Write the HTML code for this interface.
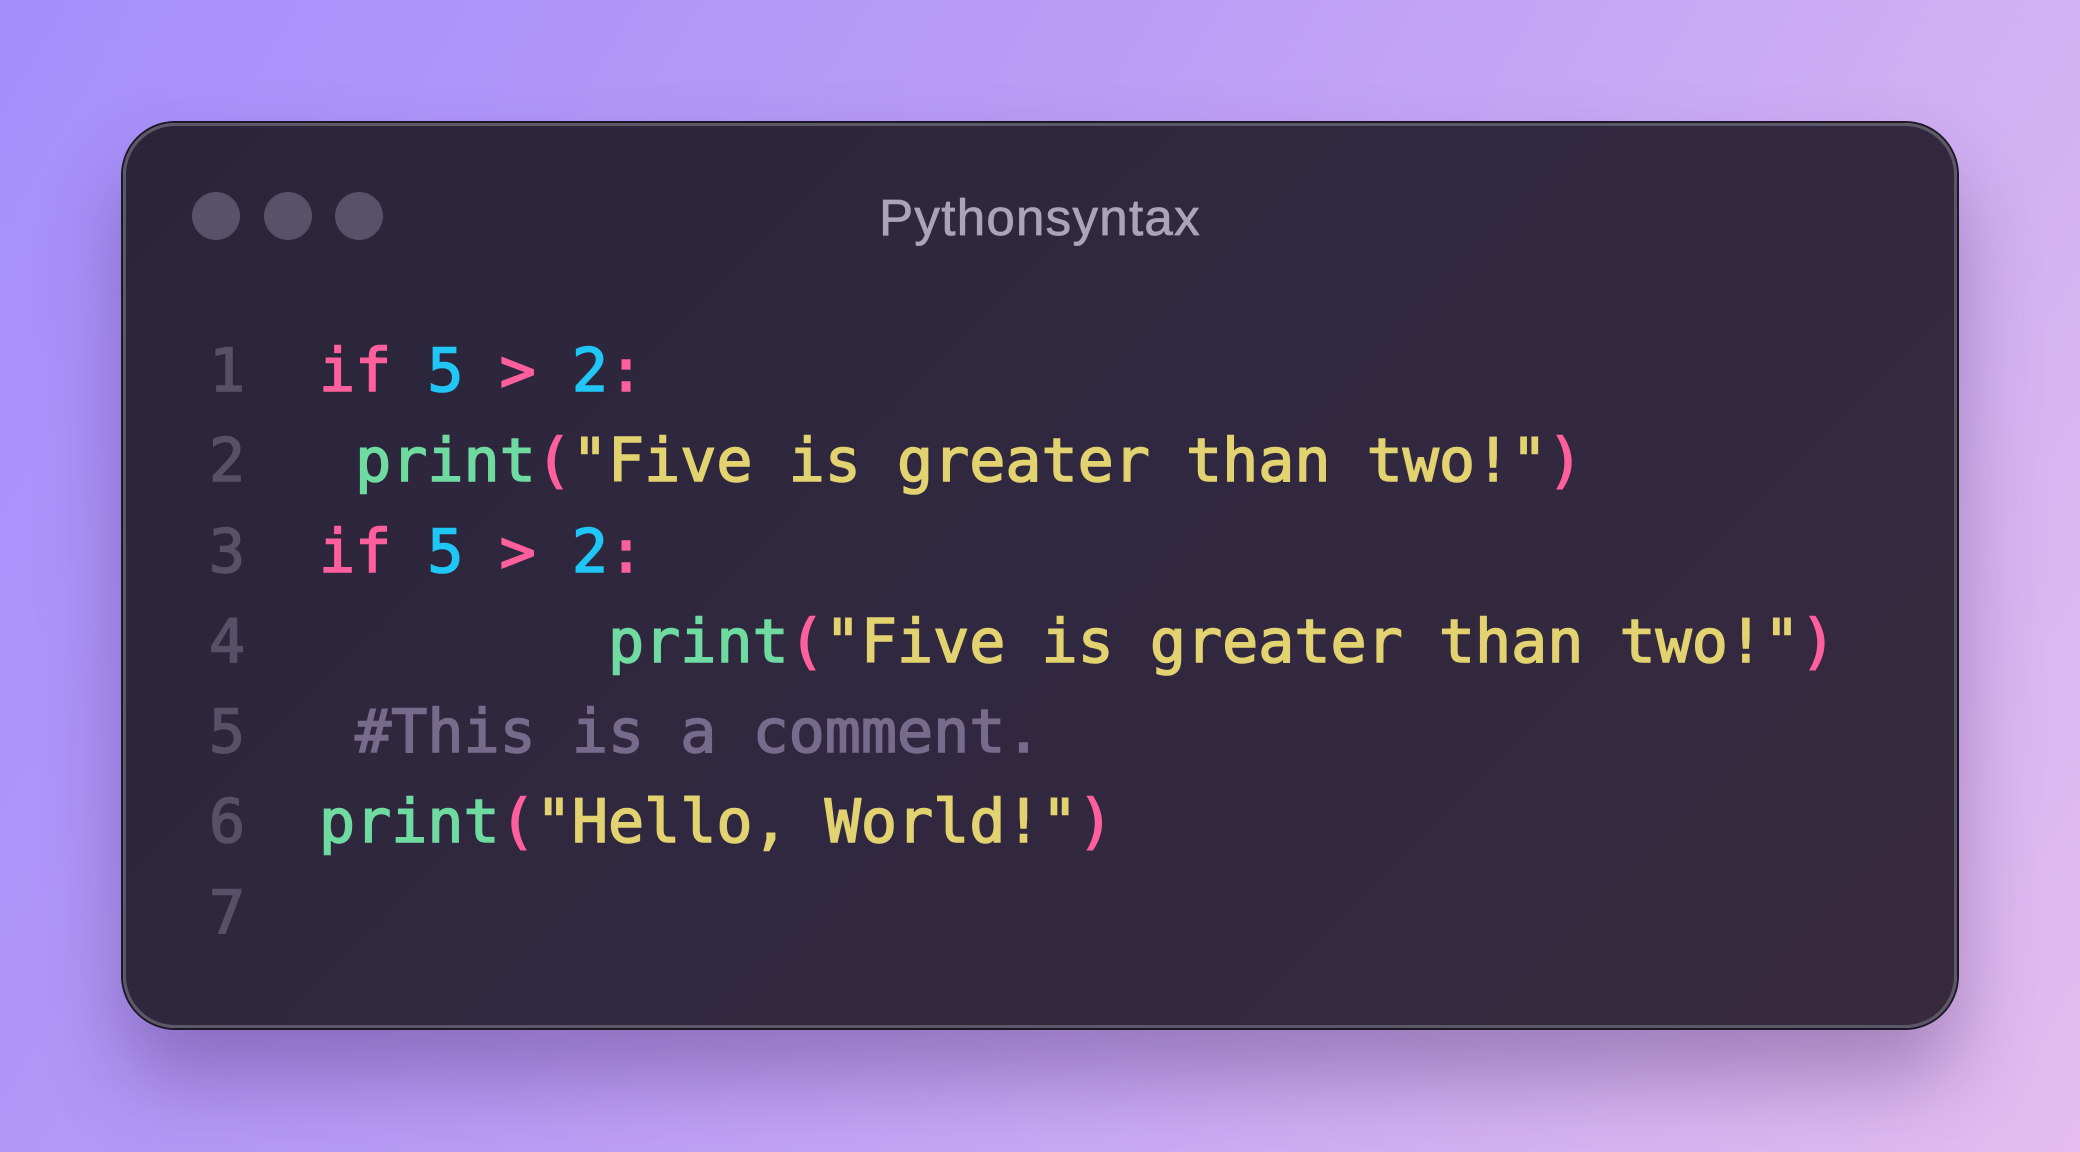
<!DOCTYPE html>
<html><head><meta charset="utf-8"><style>
html,body{margin:0;padding:0}
body{width:2080px;height:1152px;overflow:hidden;position:relative;
background:linear-gradient(120deg,#a48ffb 0%,#b99cf6 40%,#d2b0f3 75%,#e4bdee 100%);}
.win{position:absolute;left:123px;top:123px;width:1834px;height:905px;box-sizing:border-box;
border-radius:52px;background:linear-gradient(135deg,#2a2539 0%,#302840 50%,#372a3c 100%);
border:3px solid #5d5867;box-shadow:0 0 0 2px #1d1825,0 50px 80px rgba(60,30,90,0.35);}
.dot{position:absolute;top:192px;width:48px;height:48px;border-radius:50%;background:#57526a}
.title{position:absolute;left:0;width:2080px;top:188px;text-align:center;font:51px "Liberation Sans",sans-serif;color:#aaa4b6;letter-spacing:1.3px;-webkit-text-stroke:0.8px #aaa4b6}
.code{position:absolute;top:326px;left:0;font-family:"DejaVu Sans Mono",monospace;font-size:60px;line-height:90.3px;white-space:pre;-webkit-text-stroke:1.6px currentColor}
.ln{position:absolute;left:209px;color:#575168}
.c{position:absolute;left:319px}
.k{color:#ff5f9c}.n{color:#1fc6f6}.f{color:#6fdba0}.s{color:#e3d370}.m{color:#776b8c}
</style></head><body>
<div class="win"></div>
<div class="dot" style="left:192px"></div>
<div class="dot" style="left:264px"></div>
<div class="dot" style="left:335px"></div>
<div class="title">Pythonsyntax</div>
<div class="code"><div class="ln">1
2
3
4
5
6
7</div><div class="c"><span class="k">if</span> <span class="n">5</span> <span class="k">&gt;</span> <span class="n">2</span><span class="k">:</span>
 <span class="f">print</span><span class="k">(</span><span class="s">"Five is greater than two!"</span><span class="k">)</span>
<span class="k">if</span> <span class="n">5</span> <span class="k">&gt;</span> <span class="n">2</span><span class="k">:</span>
        <span class="f">print</span><span class="k">(</span><span class="s">"Five is greater than two!"</span><span class="k">)</span>
 <span class="m">#This is a comment.</span>
<span class="f">print</span><span class="k">(</span><span class="s">"Hello, World!"</span><span class="k">)</span>
</div></div>
</body></html>
